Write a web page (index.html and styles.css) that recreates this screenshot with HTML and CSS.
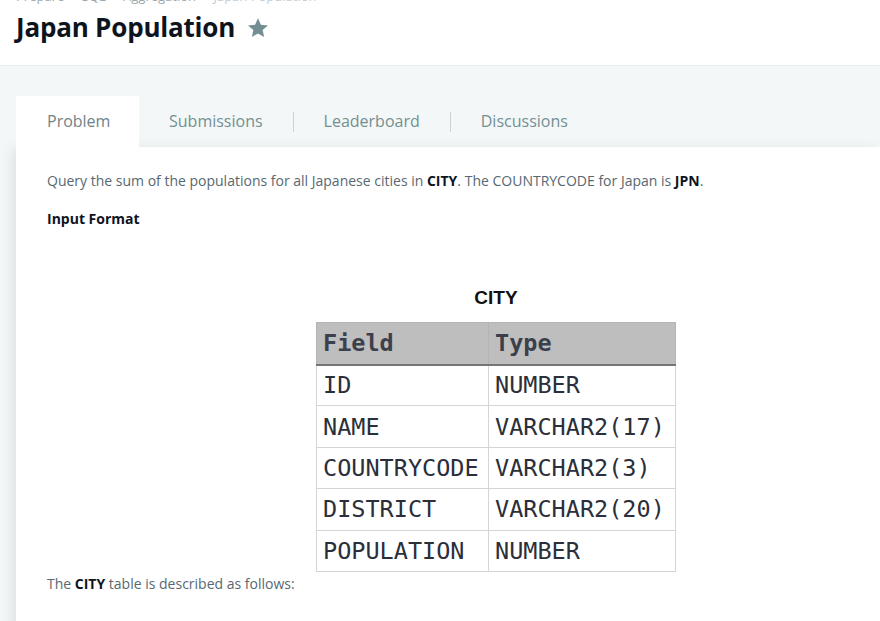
FILE: index.html
```html
<!DOCTYPE html>
<html>
<head>
<meta charset="utf-8">
<link rel="stylesheet" href="styles.css">
</head>
<body>
<header class="page-header">
  <nav class="crumbs">Prepare &nbsp;›&nbsp; SQL &nbsp;›&nbsp; Aggregation &nbsp;›&nbsp; <span class="crumb-cur">Japan Population</span></nav>
  <h1 class="title">Japan Population
    <svg class="star" viewBox="0 0 24 24" width="24" height="24"><path d="M12 2.2l2.9 6.6 7.1.6-5.4 4.7 1.6 7-6.2-3.7-6.2 3.7 1.6-7L2 9.4l7.1-.6z" fill="#738f93"/></svg>
  </h1>
</header>
<main class="stage">
  <div class="tabs">
    <div class="tab active">Problem</div>
    <div class="tab">Submissions</div>
    <div class="sep"></div>
    <div class="tab">Leaderboard</div>
    <div class="sep"></div>
    <div class="tab">Discussions</div>
  </div>
  <section class="card">
    <p class="text">Query the sum of the populations for all Japanese cities in <b>CITY</b>. The COUNTRYCODE for Japan is <b>JPN</b>.</p>
    <p class="label">Input Format</p>
    <div class="figure">
      <div class="fig-title">CITY</div>
      <table class="schema">
        <thead><tr><th>Field</th><th>Type</th></tr></thead>
        <tbody>
          <tr><td>ID</td><td>NUMBER</td></tr>
          <tr><td>NAME</td><td>VARCHAR2(17)</td></tr>
          <tr><td>COUNTRYCODE</td><td>VARCHAR2(3)</td></tr>
          <tr><td>DISTRICT</td><td>VARCHAR2(20)</td></tr>
          <tr><td>POPULATION</td><td>NUMBER</td></tr>
        </tbody>
      </table>
    </div>
    <p class="text after">The <b>CITY</b> table is described as follows:</p>
  </section>
</main>
</body>
</html>
```
FILE: styles.css
```css
html, body {
  margin: 0;
  padding: 0;
  background: #f3f7f7;
  font-family: "Open Sans", "DejaVu Sans", sans-serif;
  height: 621px;
  overflow: hidden;
}
.page-header {
  background: #fff;
  height: 66px;
  border-bottom: 1px solid #e8eeee;
  padding: 0 16px;
  box-sizing: border-box;
  position: relative;
  overflow: hidden;
}
.crumbs {
  font-size: 13px;
  color: #9aa8ad;
  line-height: 16px;
  margin-top: -12px;
  height: 16px;
  white-space: nowrap;
}
.crumb-cur { color: #c2ccd0; }
.title {
  margin: 0;
  font-size: 26px;
  font-weight: 700;
  color: #0e141e;
  line-height: 36px;
  margin-top: 5px;
  display: flex;
  align-items: center;
  letter-spacing: -0.2px;
}
.star { margin-left: 11px; margin-top: 1px; }
.stage {
  padding: 30px 0 0 16px;
}
.tabs {
  display: flex;
  align-items: center;
  height: 51px;
}
.tab {
  font-size: 16px;
  color: #738f93;
  padding: 0 30px;
  height: 51px;
  line-height: 51px;
  box-sizing: border-box;
}
.tab.active {
  background: #fff;
  padding: 0 31px;
  width: 123px;
  color: #6f8389;
}
.sep {
  width: 1px;
  height: 20px;
  background: #c9d3d6;
}
.card {
  background: #fff;
  height: 500px;
  padding: 22px 31px;
  box-shadow: -4px 2px 12px rgba(0, 0, 0, 0.09);
}
.text {
  margin: 0;
  font-size: 14px;
  line-height: 24px;
  color: #576871;
}
.text b, .label {
  color: #0e141e;
  font-weight: 700;
}
.label {
  margin: 14px 0 0;
  font-size: 14px;
  line-height: 24px;
}
.figure {
  margin: 55px 0 0 269px;
  width: 360px;
}
.fig-title {
  font-family: "Liberation Sans", Arial, sans-serif;
  font-weight: 700;
  font-size: 19px;
  text-align: center;
  color: #111;
  margin-left: 0;
  line-height: 24px;
  margin-bottom: 12px;
}
.schema {
  border-collapse: collapse;
  font-family: "DejaVu Sans Mono", monospace;
  font-size: 23.5px;
  color: #2b2f3a;
  width: 360px;
}
.schema th, .schema td {
  border: 1px solid #d5d5d5;
  text-align: left;
  padding: 0 5px 0 6px;
  height: 41.4px;
  box-sizing: border-box;
}
.schema th {
  background: #bebebe;
  color: #3b404c;
  font-weight: 700;
  height: 42px;
  border-bottom: 2px solid #767676;
  border-color: #b4b4b4 #b4b4b4 #767676;
}
.schema th:first-child, .schema td:first-child { width: 172px; }
.after { margin-top: 0; }
```
